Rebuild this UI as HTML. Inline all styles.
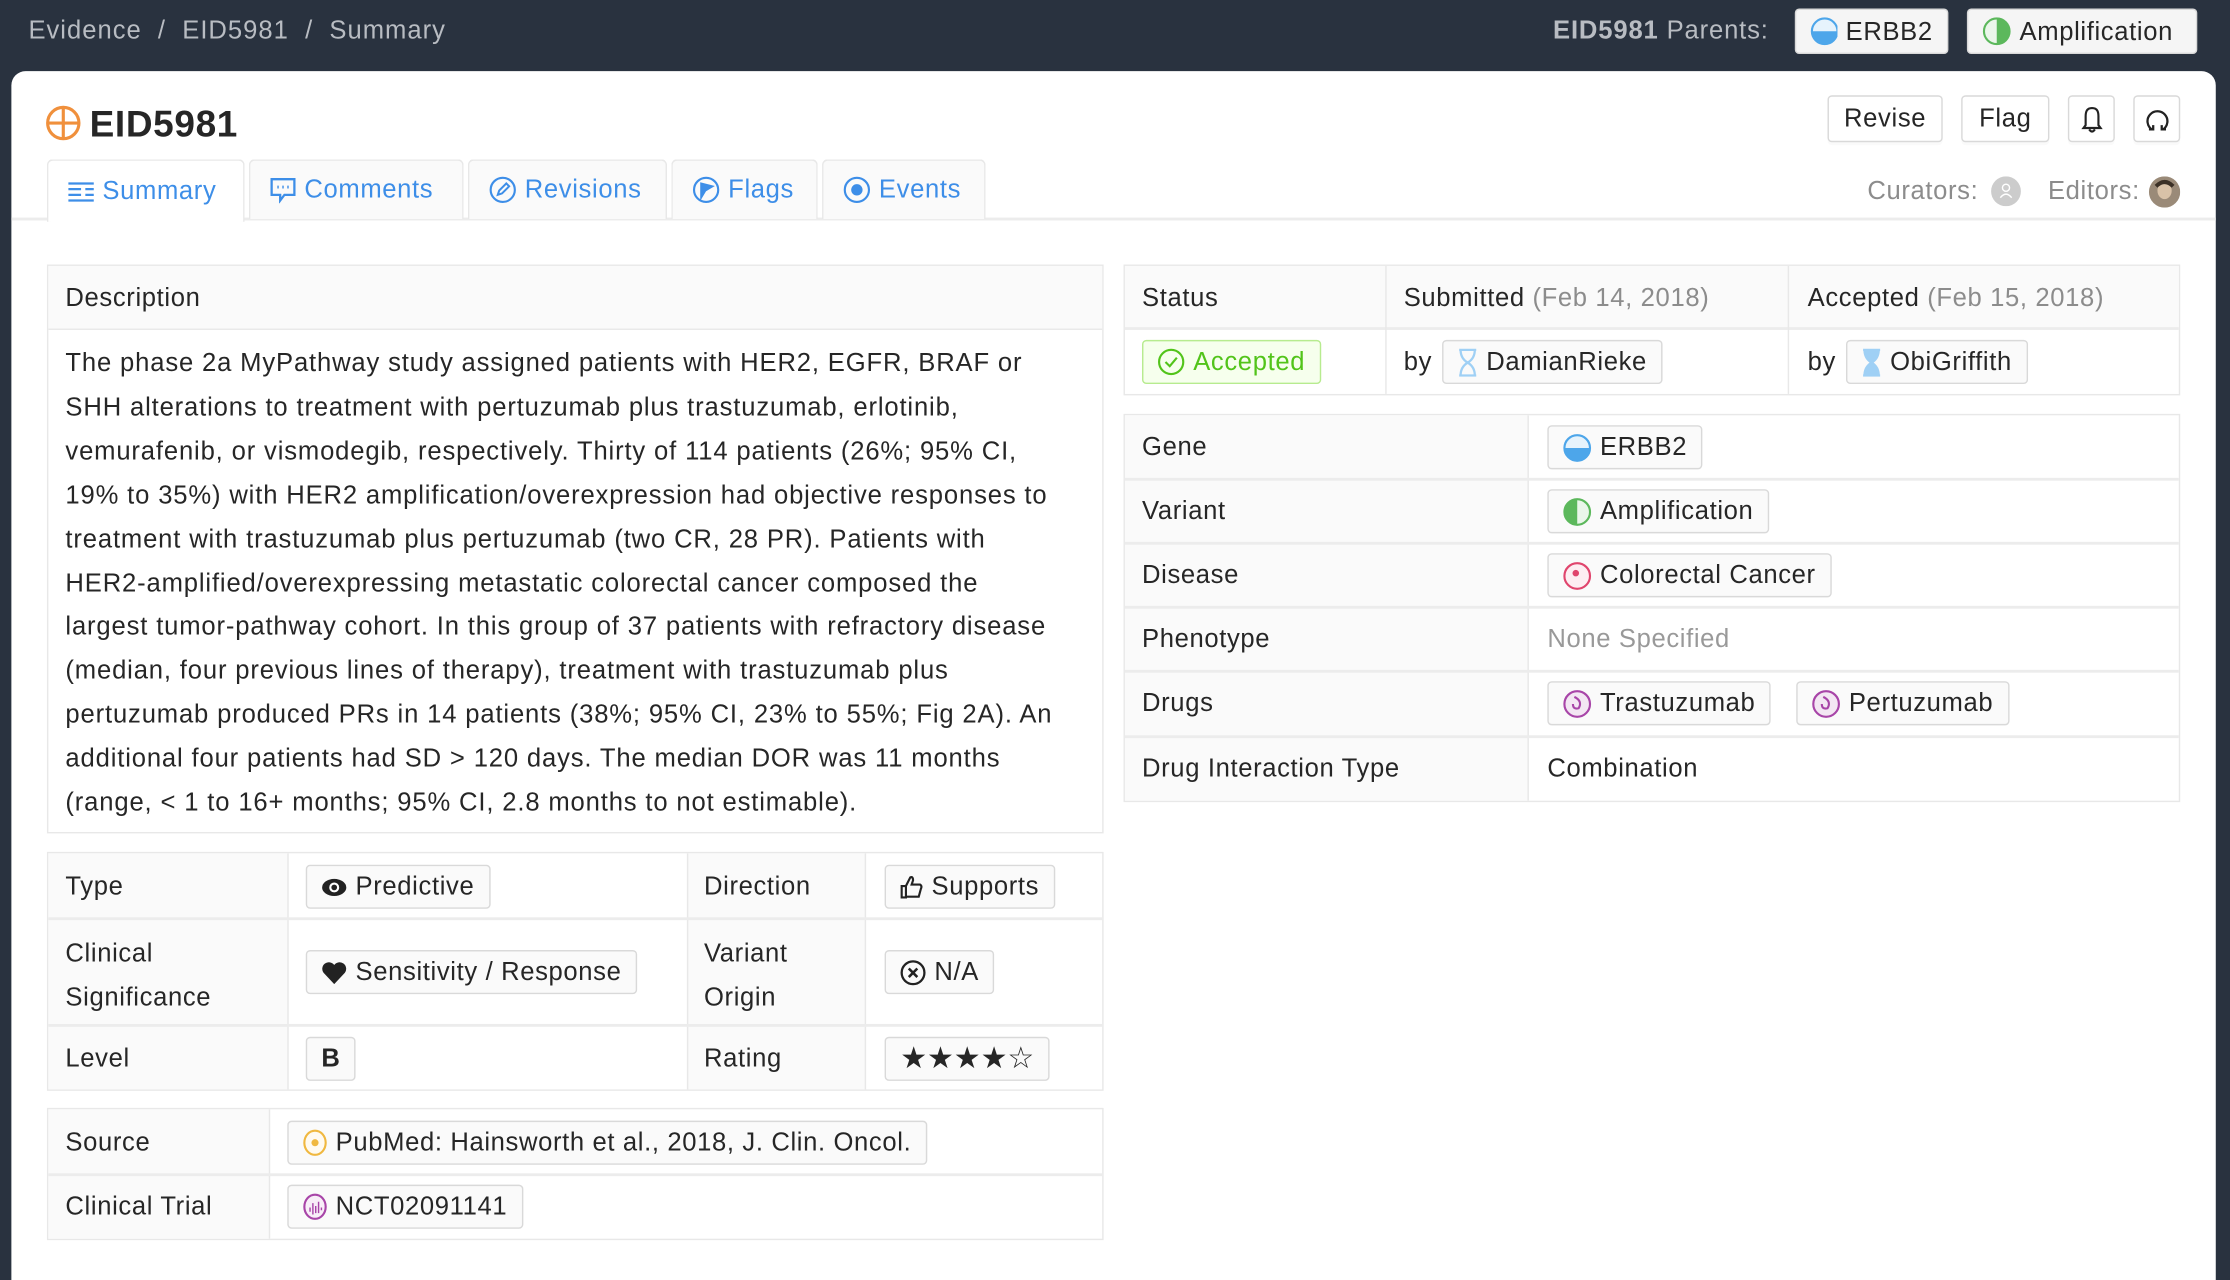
<!DOCTYPE html>
<html><head><meta charset="utf-8"><style>
*{box-sizing:border-box;margin:0;padding:0}
html,body{width:2230px;height:1262px;overflow:hidden;background:#29323f}
#w{position:absolute;left:0;top:0;width:1568px;height:888px;transform:scale(1.42219);transform-origin:0 0;font-family:"Liberation Sans",sans-serif;color:#262626;font-size:18px;letter-spacing:.45px}
.a{position:absolute}
.bc{left:20px;top:11px;color:#b8bcc2;font-size:18px;letter-spacing:.7px;white-space:nowrap}
.card{left:8px;top:50px;width:1550px;height:850px;background:#fff;border-radius:10px 10px 0 0}
.tag{position:absolute;height:31px;border:1px solid #d9d9d9;background:#fafafa;border-radius:3px;display:flex;align-items:center;padding:0 10px;white-space:nowrap;font-size:18px;gap:6px}
.btn{position:absolute;height:33px;border:1px solid #d9d9d9;background:#fff;border-radius:3px;display:flex;align-items:center;justify-content:center;font-size:18px;box-shadow:0 2px 0 rgba(0,0,0,.02)}
.tab{position:absolute;top:112px;height:42px;border:1px solid #e8e8e8;border-bottom:none;background:#fafafa;border-radius:4px 4px 0 0;color:#3d8ee8;display:flex;align-items:center;padding-left:14px;gap:6px;font-size:18px}
.box{position:absolute;border:1px solid #e8e8e8;background:#fff}
.lab{position:absolute;background:#fafafa;border-right:1px solid #e8e8e8}
.hl{position:absolute;height:1px;background:#ececec;left:0;right:0}
.t{position:absolute;white-space:nowrap}
.g{color:#8c8c8c}
</style></head><body><div id="w">
<div class="a bc">Evidence &nbsp;/&nbsp; EID5981 &nbsp;/&nbsp; Summary</div>
<div class="a t" style="left:1092px;top:11px;color:#b8bcc2;letter-spacing:.6px"><b style="font-weight:600">EID5981</b> Parents:</div>
<div class="tag" style="left:1262px;top:6px;width:108px;height:32px;background:#f5f5f5"><svg width="20" height="20"><circle cx="10" cy="10" r="9" fill="#e6f3fc" stroke="#4da6ea" stroke-width="1.5"/><path d="M1 10A9 9 0 0 0 19 10Z" fill="#4da6ea"/></svg>ERBB2</div>
<div class="tag" style="left:1383px;top:6px;width:162px;height:32px;background:#f5f5f5"><svg width="20" height="20"><circle cx="10" cy="10" r="9" fill="#eaf6ea" stroke="#5cb85c" stroke-width="1.5"/><path d="M10 1A9 9 0 0 1 10 19Z" fill="#5cb85c"/></svg>Amplification</div>
<div class="a card"></div>
<svg class="a" style="left:32px;top:74px" width="25" height="25"><circle cx="12.5" cy="12.5" r="11" fill="none" stroke="#f0903c" stroke-width="2.2"/><path d="M12.5 1.5V23.5M1.5 12.5H23.5" stroke="#f0903c" stroke-width="2.2"/></svg>
<div class="t" style="left:63px;top:72px;font-size:26px;font-weight:bold">EID5981</div>
<div class="btn" style="left:1285px;top:67px;width:81px">Revise</div>
<div class="btn" style="left:1379px;top:67px;width:62px">Flag</div>
<div class="btn" style="left:1454px;top:67px;width:33px"><svg width="16" height="20"><path d="M8 2C4 2 3.5 5 3.5 8V14L2 16H14L12.5 14V8C12.5 5 12 2 8 2ZM6 17Q8 20 10 17" fill="none" stroke="#222" stroke-width="1.5"/></svg></div>
<div class="btn" style="left:1500px;top:67px;width:33px"><svg width="18" height="20"><path d="M5 17A7 7 0 1 1 13 17M3 17H6V14M15 17H12V14" fill="none" stroke="#222" stroke-width="1.6"/></svg></div>
<div class="a" style="left:8px;right:10px;top:153px;height:2px;background:#ececec"></div>
<div class="tab" style="left:33px;width:139px;background:#fff;height:44px"><svg width="18" height="14"><path d="M0 1H18M0 13H18M0 5H9M0 9H9M12 5H18M12 9H18" stroke="#3d8ee8" stroke-width="1.6"/></svg>Summary</div>
<div class="tab" style="left:175px;width:151px"><svg width="18" height="18"><path d="M1 1H17V12H10L7 16V12H1Z" fill="none" stroke="#3d8ee8" stroke-width="1.6"/><path d="M5 6.5H6M8.5 6.5H9.5M12 6.5H13" stroke="#3d8ee8" stroke-width="2"/></svg>Comments</div>
<div class="tab" style="left:329px;width:140px"><svg width="19" height="19"><circle cx="9.5" cy="9.5" r="8.5" fill="none" stroke="#3d8ee8" stroke-width="1.5"/><path d="M6 13L7 10L12 5L14 7L9 12Z" fill="none" stroke="#3d8ee8" stroke-width="1.4"/></svg>Revisions</div>
<div class="tab" style="left:472px;width:103px"><svg width="19" height="19"><circle cx="9.5" cy="9.5" r="8.5" fill="none" stroke="#3d8ee8" stroke-width="1.5"/><path d="M6 15V5L14 7L9 10Z" fill="#3d8ee8" stroke="#3d8ee8" stroke-width="1.3"/></svg>Flags</div>
<div class="tab" style="left:578px;width:115px"><svg width="19" height="19"><circle cx="9.5" cy="9.5" r="8.5" fill="none" stroke="#3d8ee8" stroke-width="1.5"/><circle cx="9.5" cy="9.5" r="4" fill="#3d8ee8"/></svg>Events</div>
<div class="t g" style="left:1313px;top:124px">Curators:</div>
<svg class="a" style="left:1400px;top:124px" width="21" height="21"><circle cx="10.5" cy="10.5" r="10.5" fill="#ccc"/><circle cx="10.5" cy="8" r="2.5" fill="none" stroke="#fff"/><path d="M6.5 15Q10.5 10 14.5 15" fill="none" stroke="#fff"/></svg>
<div class="t g" style="left:1440px;top:124px">Editors:</div>
<svg class="a" style="left:1511px;top:124px" width="22" height="22"><circle cx="11" cy="11" r="11" fill="#9a8a78"/><ellipse cx="11" cy="10" rx="5" ry="6" fill="#d9c2a8"/><path d="M4 6Q11 -1 18 6L16 8Q11 3 6 8Z" fill="#3b3026"/></svg>

<div class="box" style="left:33px;top:186px;width:743px;height:400px">
<div class="a" style="left:0;top:0;right:0;height:45px;background:#fafafa;border-bottom:1px solid #e8e8e8"></div>
<div class="t" style="left:12px;top:12px">Description</div>
<div class="t" style="left:12px;top:53px;line-height:30.9px;font-size:18px;letter-spacing:.6px">The phase 2a MyPathway study assigned patients with HER2, EGFR, BRAF or<br>SHH alterations to treatment with pertuzumab plus trastuzumab, erlotinib,<br>vemurafenib, or vismodegib, respectively. Thirty of 114 patients (26%; 95% CI,<br>19% to 35%) with HER2 amplification/overexpression had objective responses to<br>treatment with trastuzumab plus pertuzumab (two CR, 28 PR). Patients with<br>HER2-amplified/overexpressing metastatic colorectal cancer composed the<br>largest tumor-pathway cohort. In this group of 37 patients with refractory disease<br>(median, four previous lines of therapy), treatment with trastuzumab plus<br>pertuzumab produced PRs in 14 patients (38%; 95% CI, 23% to 55%; Fig 2A). An<br>additional four patients had SD &gt; 120 days. The median DOR was 11 months<br>(range, &lt; 1 to 16+ months; 95% CI, 2.8 months to not estimable).</div>
</div>

<div class="box" style="left:33px;top:599px;width:743px;height:168px">
<div class="lab" style="left:0;top:0;width:169px;height:166px"></div>
<div class="lab" style="left:449px;top:0;width:126px;height:166px;border-left:1px solid #e8e8e8"></div>
<div class="hl" style="top:45px;height:2px"></div><div class="hl" style="top:120px;height:2px"></div>
<div class="t" style="left:12px;top:13px">Type</div>
<div class="t" style="left:12px;top:55px;line-height:31px">Clinical<br>Significance</div>
<div class="t" style="left:12px;top:134px">Level</div>
<div class="t" style="left:461px;top:13px">Direction</div>
<div class="t" style="left:461px;top:55px;line-height:31px">Variant<br>Origin</div>
<div class="t" style="left:461px;top:134px">Rating</div>
<div class="tag" style="left:181px;top:8px"><svg width="18" height="14"><ellipse cx="9" cy="7" rx="8.5" ry="6" fill="#222"/><circle cx="9" cy="7" r="3.5" fill="#fff"/><circle cx="9" cy="7" r="2" fill="#222"/></svg>Predictive</div>
<div class="tag" style="left:181px;top:68px"><svg width="18" height="16"><path d="M9 16L1.5 8A4.5 4.5 0 0 1 9 2.5A4.5 4.5 0 0 1 16.5 8Z" fill="#222"/></svg>Sensitivity / Response</div>
<div class="tag" style="left:181px;top:129px;font-weight:bold">B</div>
<div class="tag" style="left:588px;top:8px"><svg width="16" height="17"><path d="M1 8H4V16H1ZM4 8L7 2Q9 1 9 4L8 7H14Q15.5 8 14.5 10L13 15.5H4" fill="none" stroke="#222" stroke-width="1.5"/></svg>Supports</div>
<div class="tag" style="left:588px;top:68px"><svg width="18" height="18"><circle cx="9" cy="9" r="8" fill="none" stroke="#222" stroke-width="1.6"/><path d="M6 6L12 12M12 6L6 12" stroke="#222" stroke-width="1.8"/></svg>N/A</div>
<div class="tag" style="left:588px;top:129px;gap:1px;font-size:21px;letter-spacing:0px">★★★★☆</div>
</div>

<div class="box" style="left:33px;top:779px;width:743px;height:93px">
<div class="lab" style="left:0;top:0;width:156px;height:91px"></div>
<div class="hl" style="top:45px;height:2px"></div>
<div class="t" style="left:12px;top:13px">Source</div>
<div class="t" style="left:12px;top:58px">Clinical Trial</div>
<div class="tag" style="left:168px;top:8px"><svg width="17" height="19"><ellipse cx="8.5" cy="9.5" rx="7.5" ry="8.5" fill="#fffaf0" stroke="#f0b840" stroke-width="1.5"/><circle cx="8.5" cy="9.5" r="2.5" fill="#f0b840"/></svg>PubMed: Hainsworth et al., 2018, J. Clin. Oncol.</div>
<div class="tag" style="left:168px;top:53px"><svg width="17" height="19"><ellipse cx="8.5" cy="9.5" rx="7.5" ry="8.5" fill="#f8eef8" stroke="#a845a8" stroke-width="1.5"/><path d="M5 10V13M7 7V15M9 9V14M11 6V14M13 10V12" stroke="#a845a8" stroke-width="1"/></svg>NCT02091141</div>
</div>

<div class="box" style="left:790px;top:186px;width:743px;height:92px">
<div class="a" style="left:0;top:0;right:0;height:45px;background:#fafafa;border-bottom:2px solid #ececec"></div>
<div class="a" style="left:183px;top:0;width:1px;height:90px;background:#e8e8e8"></div>
<div class="a" style="left:466px;top:0;width:1px;height:90px;background:#e8e8e8"></div>
<div class="t" style="left:12px;top:12px">Status</div>
<div class="t" style="left:196px;top:12px">Submitted <span class="g">(Feb 14, 2018)</span></div>
<div class="t" style="left:480px;top:12px">Accepted <span class="g">(Feb 15, 2018)</span></div>
<div class="tag" style="left:12px;top:52px;border-color:#b7eb8f;background:#f6ffed;color:#52c41a"><svg width="19" height="19"><circle cx="9.5" cy="9.5" r="8.5" fill="none" stroke="#52c41a" stroke-width="1.5"/><path d="M5.5 9.5L8.5 12.5L13.5 6.5" fill="none" stroke="#52c41a" stroke-width="1.5"/></svg>Accepted</div>
<div class="t" style="left:196px;top:57px">by</div>
<div class="tag" style="left:223px;top:52px"><svg width="14" height="20"><path d="M1 1H13M1 19H13M2 1Q2 7 7 10Q12 7 12 1M2 19Q2 13 7 10Q12 13 12 19" fill="none" stroke="#9fd0f5" stroke-width="1.6"/></svg>DamianRieke</div>
<div class="t" style="left:480px;top:57px">by</div>
<div class="tag" style="left:507px;top:52px"><svg width="14" height="20"><path d="M1 1H13M1 19H13M2 1Q2 7 7 10Q12 7 12 1M2 19Q2 13 7 10Q12 13 12 19Z" fill="#9fd0f5" stroke="#9fd0f5" stroke-width="1.6"/></svg>ObiGriffith</div>
</div>

<div class="box" style="left:790px;top:291px;width:743px;height:273px">
<div class="lab" style="left:0;top:0;width:284px;height:271px"></div>
<div class="hl" style="top:44px;height:2px"></div><div class="hl" style="top:89px;height:2px"></div><div class="hl" style="top:134px;height:2px"></div><div class="hl" style="top:179px;height:2px"></div><div class="hl" style="top:225px;height:2px"></div>
<div class="t" style="left:12px;top:12px">Gene</div>
<div class="t" style="left:12px;top:57px">Variant</div>
<div class="t" style="left:12px;top:102px">Disease</div>
<div class="t" style="left:12px;top:147px">Phenotype</div>
<div class="t" style="left:12px;top:192px">Drugs</div>
<div class="t" style="left:12px;top:238px">Drug Interaction Type</div>
<div class="tag" style="left:297px;top:7px"><svg width="20" height="20"><circle cx="10" cy="10" r="9" fill="#e6f3fc" stroke="#4da6ea" stroke-width="1.5"/><path d="M1 10A9 9 0 0 0 19 10Z" fill="#4da6ea"/></svg>ERBB2</div>
<div class="tag" style="left:297px;top:52px"><svg width="20" height="20"><circle cx="10" cy="10" r="9" fill="#eaf6ea" stroke="#5cb85c" stroke-width="1.5"/><path d="M10 1A9 9 0 0 0 10 19Z" fill="#5cb85c"/></svg>Amplification</div>
<div class="tag" style="left:297px;top:97px"><svg width="20" height="20"><circle cx="10" cy="10" r="9" fill="#fdeef2" stroke="#e0456d" stroke-width="1.5"/><circle cx="9" cy="8" r="2.3" fill="#e0456d"/></svg>Colorectal Cancer</div>
<div class="t g" style="left:297px;top:147px;color:#999">None Specified</div>
<div class="tag" style="left:297px;top:187px"><svg width="20" height="20"><circle cx="10" cy="10" r="9" fill="#f3e6f3" stroke="#a845a8" stroke-width="1.5"/><path d="M8 5Q14 8 11 13Q7 14 7 10" fill="none" stroke="#a845a8" stroke-width="1.5"/></svg>Trastuzumab</div>
<div class="tag" style="left:472px;top:187px"><svg width="20" height="20"><circle cx="10" cy="10" r="9" fill="#f3e6f3" stroke="#a845a8" stroke-width="1.5"/><path d="M8 5Q14 8 11 13Q7 14 7 10" fill="none" stroke="#a845a8" stroke-width="1.5"/></svg>Pertuzumab</div>
<div class="t" style="left:297px;top:238px">Combination</div>
</div>
</div></body></html>
